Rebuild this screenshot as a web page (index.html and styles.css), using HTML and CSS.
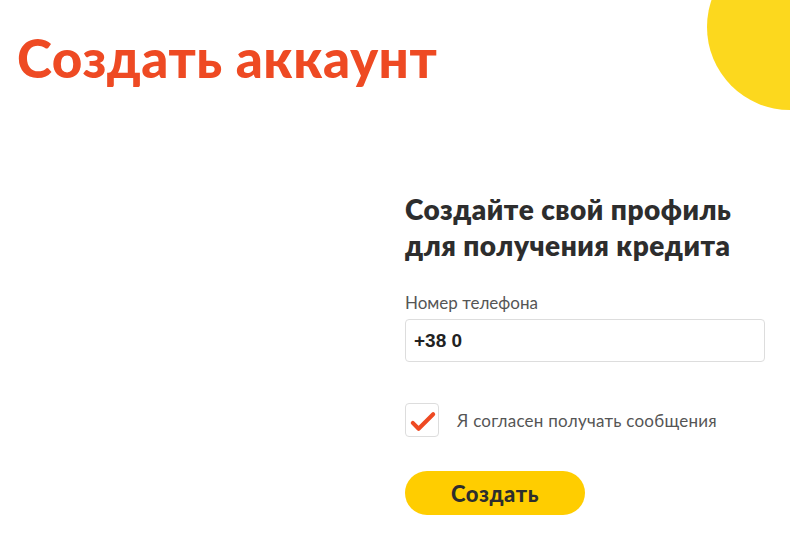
FILE: index.html
```html
<!DOCTYPE html>
<html lang="ru">
<head>
    <meta charset="UTF-8">
    <meta name="viewport" content="width=device-width, initial-scale=1.0">
    <title>Создать аккаунт</title>
    <link rel="stylesheet" href="styles.css">
</head>
<body>
    <div class="page">
        <div class="circle"></div>
        <h1 class="title">Создать аккаунт</h1>

        <div class="content">
            <form class="signup" onsubmit="return false">
                <h2>Создайте свой профиль<br>для получения кредита</h2>

                <label class="field-label" for="phone">Номер телефона</label>
                <input type="tel" id="phone" class="phone" value="+38 0" inputmode="tel">

                <label class="agree">
                    <span class="check">
                        <svg width="33" height="33" viewBox="0 0 33 33">
                            <path d="M7 19 L13 25 L28 10" fill="none" stroke="#ee4a23" stroke-width="4.2" stroke-linecap="round" stroke-linejoin="round"/>
                        </svg>
                    </span>
                    <span class="agree-text">Я согласен получать сообщения</span>
                </label>

                <button type="submit" class="submit">Создать</button>
            </form>
        </div>
    </div>
</body>
</html>
```

FILE: styles.css
```css
body {
    margin: 0;
    font-family: "Lato", "Noto Sans", sans-serif;
    color: #2d2d2d;
    background: #fff;
}
.page {
    position: relative;
    height: 100vh;
    overflow: hidden;
}
.circle {
    position: absolute;
    left: 707px;
    top: -56px;
    width: 166px;
    height: 166px;
    border-radius: 50%;
    background: #fcd81e;
}
.title {
    margin: 0;
    padding: 30px 0 0 17px;
    font-size: 53px;
    line-height: 56px;
    font-weight: 900;
    color: #ee4a23;
    letter-spacing: 0.5px;
}
.content {
    display: flex;
    justify-content: flex-end;
    padding: 0 25px 0 0;
}
.signup {
    width: 360px;
    display: flex;
    flex-direction: column;
    align-items: flex-start;
    padding-top: 105px;
}
.signup h2 {
    margin: 0 0 30px;
    font-size: 28px;
    line-height: 36px;
    font-weight: 800;
    letter-spacing: 0.5px;
    color: #2d2d2d;
}
.field-label {
    font-size: 17px;
    line-height: 20px;
    color: #555;
    margin-bottom: 6px;
}
.phone {
    box-sizing: border-box;
    width: 100%;
    height: 43px;
    padding: 0 8px;
    border: 1px solid #ddd;
    border-radius: 4px;
    font-family: "Liberation Sans", Arial, sans-serif;
    font-size: 19px;
    font-weight: bold;
    color: #222;
    margin: 0 0 41px;
}
.agree {
    display: flex;
    align-items: center;
    gap: 18px;
    margin-bottom: 34px;
}
.check {
    box-sizing: border-box;
    width: 34px;
    height: 34px;
    border: 1px solid #ddd;
    border-radius: 4px;
    display: flex;
}
.agree-text {
    font-size: 17px;
    letter-spacing: 0.25px;
    color: #555;
}
.submit {
    width: 180px;
    height: 44px;
    border: none;
    border-radius: 22px;
    background: #ffcd00;
    font-family: "Lato", "Noto Sans", sans-serif;
    font-size: 22px;
    font-weight: 900;
    letter-spacing: 0.6px;
    color: #2d2d2d;
    cursor: pointer;
}
```
